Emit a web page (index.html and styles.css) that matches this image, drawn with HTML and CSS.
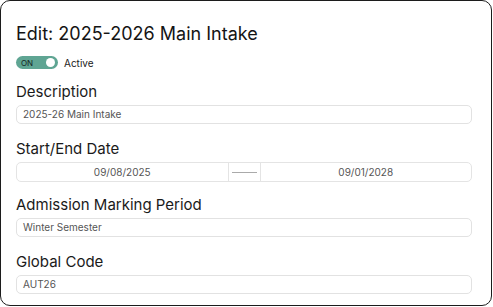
FILE: index.html
```html
<!DOCTYPE html>
<html>
<head>
<meta charset="utf-8">
<link rel="stylesheet" href="styles.css">
</head>
<body>
<div class="card">
  <h1 class="title">Edit: 2025-2026 Main Intake</h1>
  <div class="toggle-row">
    <span class="toggle"><span class="toggle-text">ON</span><span class="knob"></span></span>
    <span class="toggle-label">Active</span>
  </div>
  <div class="field field-desc">
    <label class="label">Description</label>
    <div class="input">2025-26 Main Intake</div>
  </div>
  <div class="field field-dates">
    <label class="label">Start/End Date</label>
    <div class="date-range">
      <div class="date">09/08/2025</div>
      <div class="sep"><span class="dash"></span></div>
      <div class="date">09/01/2028</div>
    </div>
  </div>
  <div class="field field-period">
    <label class="label">Admission Marking Period</label>
    <div class="input">Winter Semester</div>
  </div>
  <div class="field field-code">
    <label class="label">Global Code</label>
    <div class="input">AUT26</div>
  </div>
</div>
</body>
</html>
```
FILE: styles.css
```css
html, body {
  margin: 0;
  padding: 0;
  background: #ffffff;
}
body {
  font-family: Inter, "Noto Sans", sans-serif;
  color: #111;
}
.card {
  box-sizing: border-box;
  width: 492px;
  height: 306px;
  border: 1px solid #1c1c1c;
  border-radius: 10px;
  padding: 21px 19px 0 15px;
}
.title {
  margin: 0;
  font-size: 18px;
  font-weight: 400;
  line-height: 23px;
  color: #141414;
}
.toggle-row {
  display: flex;
  align-items: center;
  gap: 6px;
  margin-top: 11px;
  height: 13px;
}
.toggle {
  position: relative;
  box-sizing: border-box;
  width: 42px;
  height: 13px;
  border-radius: 7px;
  background: #5fa593;
  display: flex;
  align-items: center;
  padding-left: 5px;
}
.toggle-text {
  font-size: 8px;
  color: #14231f;
  line-height: 1;
}
.knob {
  position: absolute;
  right: 3px;
  top: 2px;
  width: 9px;
  height: 9px;
  border-radius: 50%;
  background: #fff;
}
.toggle-label {
  font-size: 10px;
  color: #222;
}
.field {
  display: flex;
  flex-direction: column;
  gap: 4px;
}
.field-desc { margin-top: 13px; }
.field-dates { margin-top: 15px; }
.field-period { margin-top: 13px; }
.field-code { margin-top: 15px; }
.label {
  font-size: 15px;
  line-height: 19px;
  color: #1a1a1a;
}
.input {
  box-sizing: border-box;
  height: 19px;
  border: 1px solid #e2e2e2;
  border-radius: 5px;
  padding: 0 6px;
  font-size: 10px;
  line-height: 17px;
  color: #555;
}
.date-range {
  display: flex;
  height: 20px;
  box-sizing: border-box;
  border: 1px solid #e4e4e4;
  border-radius: 5px;
}
.date {
  flex: 1;
  text-align: center;
  font-size: 10px;
  line-height: 18px;
  color: #555;
}
.sep {
  width: 31px;
  border-left: 1px solid #e4e4e4;
  border-right: 1px solid #e4e4e4;
  display: flex;
  align-items: center;
  justify-content: center;
}
.dash {
  width: 25px;
  height: 1px;
  background: #aaa;
}
```
